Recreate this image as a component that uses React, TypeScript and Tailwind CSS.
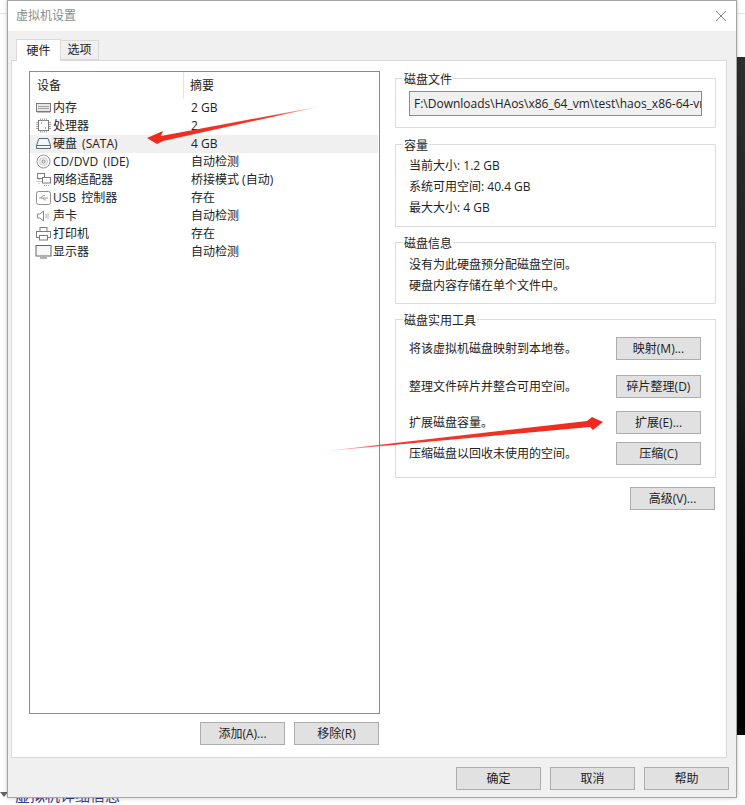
const font = { fontFamily: '"Open Sans", "Noto Sans CJK SC", sans-serif' };

const devices = [
  { name: "内存", value: "2 GB", icon: "memory" },
  { name: "处理器", value: "2", icon: "cpu" },
  { name: "硬盘 (SATA)", value: "4 GB", icon: "disk" },
  { name: "CD/DVD (IDE)", value: "自动检测", icon: "cd" },
  { name: "网络适配器", value: "桥接模式 (自动)", icon: "net" },
  { name: "USB 控制器", value: "存在", icon: "usb" },
  { name: "声卡", value: "自动检测", icon: "sound" },
  { name: "打印机", value: "存在", icon: "printer" },
  { name: "显示器", value: "自动检测", icon: "monitor" },
];

function DeviceIcon({ type }: { type: string }) {
  return (
    <svg width="17" height="16" viewBox="0 0 17 16" fill="none" stroke="#7c7c7c" strokeWidth="1" className="shrink-0">
      {type === "memory" && (
        <>
          <rect x="1.5" y="3.5" width="14" height="8" fill="#e8e8e8" />
          <path d="M3 6.5h11M3 8.5h11" stroke="#a5a5a5" />
          <path d="M2 12.5h13" stroke="#c0c0c0" />
        </>
      )}
      {type === "cpu" && (
        <>
          <rect x="3.5" y="2.5" width="10" height="10" fill="#fff" />
          <path d="M1 4.5h2M1 6.5h2M1 8.5h2M1 10.5h2M14 4.5h2M14 6.5h2M14 8.5h2M14 10.5h2M5.5 0.5v2M7.5 0.5v2M9.5 0.5v2M11.5 0.5v2M5.5 12.5v2M7.5 12.5v2M9.5 12.5v2M11.5 12.5v2" stroke="#a5a5a5" />
          <path d="M6 5h1M10 10h1" stroke="#555" />
        </>
      )}
      {type === "disk" && (
        <>
          <path d="M4 2.5h9l2.5 7v3h-14v-3z" fill="#f4f6f8" stroke="#5c6b78" />
          <path d="M1.5 9.5h14" stroke="#5c6b78" />
        </>
      )}
      {type === "cd" && (
        <>
          <circle cx="8.5" cy="7.5" r="6.5" stroke="#8f8f8f" />
          <circle cx="8.5" cy="7.5" r="4" fill="#f0f0f0" stroke="#cccccc" />
          <circle cx="8.5" cy="7.5" r="1.5" stroke="#888" />
        </>
      )}
      {type === "net" && (
        <>
          <rect x="2.5" y="1.5" width="7" height="5" />
          <rect x="7.5" y="5.5" width="8" height="5.5" fill="#fff" />
          <path d="M11.5 11v2.5M9 13.5h5M1.5 9.5h5M4 7v5" stroke="#a5a5a5" strokeDasharray="1 1" />
        </>
      )}
      {type === "usb" && (
        <>
          <rect x="1.5" y="1.5" width="14" height="13" rx="2" stroke="#8f8f8f" />
          <path d="M4 8h9M6 8l2-2.5h2M8 8l1.5 2h1.5" stroke="#999" />
        </>
      )}
      {type === "sound" && (
        <>
          <path d="M2.5 6v4h2.5l3.5 3v-10l-3.5 3z" fill="#fff" stroke="#8a8a8a" />
          <path d="M11 6v4M13 5v6" stroke="#b0b0b0" />
        </>
      )}
      {type === "printer" && (
        <>
          <rect x="5" y="1.5" width="7" height="4" />
          <rect x="1.5" y="5.5" width="14" height="6" />
          <rect x="4.5" y="9.5" width="8" height="4.5" fill="#fff" />
        </>
      )}
      {type === "monitor" && (
        <>
          <rect x="1" y="1.5" width="15" height="10.5" fill="#f7f7f7" stroke="#666" />
          <path d="M5 14h7" stroke="#b0b0b0" strokeWidth="2" />
        </>
      )}
    </svg>
  );
}

function Btn({ label }: { label: string }) {
  return (
    <div className="flex h-[23px] w-[85px] shrink-0 items-center justify-center border border-[#adadad] bg-[#e1e1e1] text-xs text-[#222]">
      {label}
    </div>
  );
}

function Group({ title, className = "", children }: { title: string; className?: string; children: React.ReactNode }) {
  return (
    <div className={`relative border border-[#dcdcdc] ${className}`}>
      <span className="absolute left-[7px] top-[-8px] bg-white px-px text-xs leading-[18px] text-[#222]">{title}</span>
      {children}
    </div>
  );
}

function ToolRow({ text, btn, className }: { text: string; btn: string; className: string }) {
  return (
    <div className={`flex items-center justify-between pl-[13px] pr-[14px] ${className}`}>
      <span>{text}</span>
      <Btn label={btn} />
    </div>
  );
}

export default function App() {
  return (
    <div className="relative h-[805px] w-[745px] overflow-hidden bg-white" style={font}>
      {/* 背景里露出来的部分 */}
      <div className="absolute left-0 top-[13px] h-px w-full bg-[#e6e6e6]" />
      <div className="absolute right-0 top-[57px] h-[678px] w-[9px] bg-gradient-to-b from-[#2e2e2e] via-[#1c1c1c] to-black" />
      <div className="absolute left-0 top-[792px] h-0 w-0 border-x-[4px] border-t-[5px] border-x-transparent border-t-[#666]" />
      <div className="absolute left-[15px] top-[785px] text-[15px] leading-[20px] text-[#3b3b8f]">虚拟机详细信息</div>

      {/* 对话框 */}
      <div className="absolute left-[7px] top-0 flex h-[798px] w-[730px] flex-col border border-[#a6a6a6] bg-[#f0f0f0] text-xs text-[#222] shadow-[0_0_4px_rgba(0,0,0,0.25)]">
        <div className="flex h-[30px] shrink-0 items-center justify-between bg-white pl-[8px] pr-[9px]">
          <span className="text-[#8c8c8c]">虚拟机设置</span>
          <svg width="12" height="12" viewBox="0 0 12 12" stroke="#8a8a8a" strokeWidth="1" fill="none">
            <path d="M1 1l10 10M11 1L1 11" />
          </svg>
        </div>

        <div className="relative flex h-[29px] shrink-0 items-end pl-[8px]">
          <div className="relative top-px z-10 flex h-[22px] w-[45px] items-center justify-center border border-b-0 border-[#d9d9d9] bg-white">硬件</div>
          <div className="flex h-[20px] w-[38px] items-center justify-center border border-l-0 border-[#d9d9d9] bg-[#f0f0f0]">选项</div>
        </div>

        <div className="ml-[3px] mr-[9px] flex h-[698px] shrink-0 gap-[15px] border border-[#d9d9d9] bg-white pl-[17px] pr-[10px] pt-[10px]">
          <div className="flex w-[351px] shrink-0 flex-col">
            <div className="h-[643px] border border-[#8c8c8c] bg-white">
              <div className="flex h-[27px] items-center">
                <div className="w-[154px] border-r border-[#e5e5e5] pl-[7px] pt-px leading-[26px]">设备</div>
                <div className="pl-[6px] pt-px">摘要</div>
              </div>
              <div>
                {devices.map((d) => (
                  <div key={d.name} className={`mr-px flex h-[18px] items-center ${d.icon === "disk" ? "bg-[#f0f0f0]" : ""}`}>
                    <div className="flex w-[155px] items-center gap-[1px] pl-[5px]">
                      <DeviceIcon type={d.icon} />
                      <span className="[word-spacing:2px]">{d.name}</span>
                    </div>
                    <span className="pl-[6px]">{d.value}</span>
                  </div>
                ))}
              </div>
            </div>
            <div className="mt-[8px] flex justify-end gap-[9px] pr-px">
              <Btn label="添加(A)..." />
              <Btn label="移除(R)" />
            </div>
          </div>

          <div className="flex min-w-0 flex-1 flex-col pt-[7px]">
            <Group title="磁盘文件" className="h-[50px]">
              <div className="ml-[13px] mr-[13px] mt-[12px] flex h-[25px] items-center overflow-hidden whitespace-nowrap border border-[#8c8c8c] bg-[#f0f0f0] pl-[4px] pr-[2px]">
                F:\Downloads\HAos\x86_64_vm\test\haos_x86-64-vm
              </div>
            </Group>
            <Group title="容量" className="mt-[16px] h-[83px] pl-[13px] pt-[10px] leading-[21px]">
              <div>当前大小: 1.2 GB</div>
              <div>系统可用空间: 40.4 GB</div>
              <div>最大大小: 4 GB</div>
            </Group>
            <Group title="磁盘信息" className="mt-[15px] h-[62px] pl-[13px] pt-[11px] leading-[21px]">
              <div>没有为此硬盘预分配磁盘空间。</div>
              <div>硬盘内容存储在单个文件中。</div>
            </Group>
            <Group title="磁盘实用工具" className="mt-[15px] h-[159px] pt-[17px]">
              <ToolRow text="将该虚拟机磁盘映射到本地卷。" btn="映射(M)..." className="" />
              <ToolRow text="整理文件碎片并整合可用空间。" btn="碎片整理(D)" className="mt-[15px]" />
              <ToolRow text="扩展磁盘容量。" btn="扩展(E)..." className="mt-[13px]" />
              <ToolRow text="压缩磁盘以回收未使用的空间。" btn="压缩(C)" className="mt-[8px]" />
            </Group>
            <div className="mt-[9px] flex justify-end pr-px">
              <Btn label="高级(V)..." />
            </div>
          </div>
        </div>

        <div className="mt-[9px] flex justify-end gap-[9px] pr-[7px]">
          <Btn label="确定" />
          <Btn label="取消" />
          <Btn label="帮助" />
        </div>
      </div>

      {/* 标注箭头 */}
      <svg className="pointer-events-none absolute left-0 top-0" width="745" height="805" viewBox="0 0 745 805">
        <defs>
          <linearGradient id="a1" gradientUnits="userSpaceOnUse" x1="327" y1="105" x2="147" y2="138">
            <stop offset="0" stopColor="#ff3b30" stopOpacity="0" />
            <stop offset="0.3" stopColor="#f8362a" />
            <stop offset="1" stopColor="#ee2a1e" />
          </linearGradient>
          <linearGradient id="a2" gradientUnits="userSpaceOnUse" x1="317" y1="452" x2="603" y2="422">
            <stop offset="0" stopColor="#ff3b30" stopOpacity="0" />
            <stop offset="0.25" stopColor="#f8362a" />
            <stop offset="1" stopColor="#ee2a1e" />
          </linearGradient>
        </defs>
        <polygon points="327,105 161,136 163,131 147,138 157,144 163,141" fill="url(#a1)" />
        <polygon points="317,452 587,421 592,417 603,422 593,430 590,427" fill="url(#a2)" />
      </svg>
    </div>
  );
}
